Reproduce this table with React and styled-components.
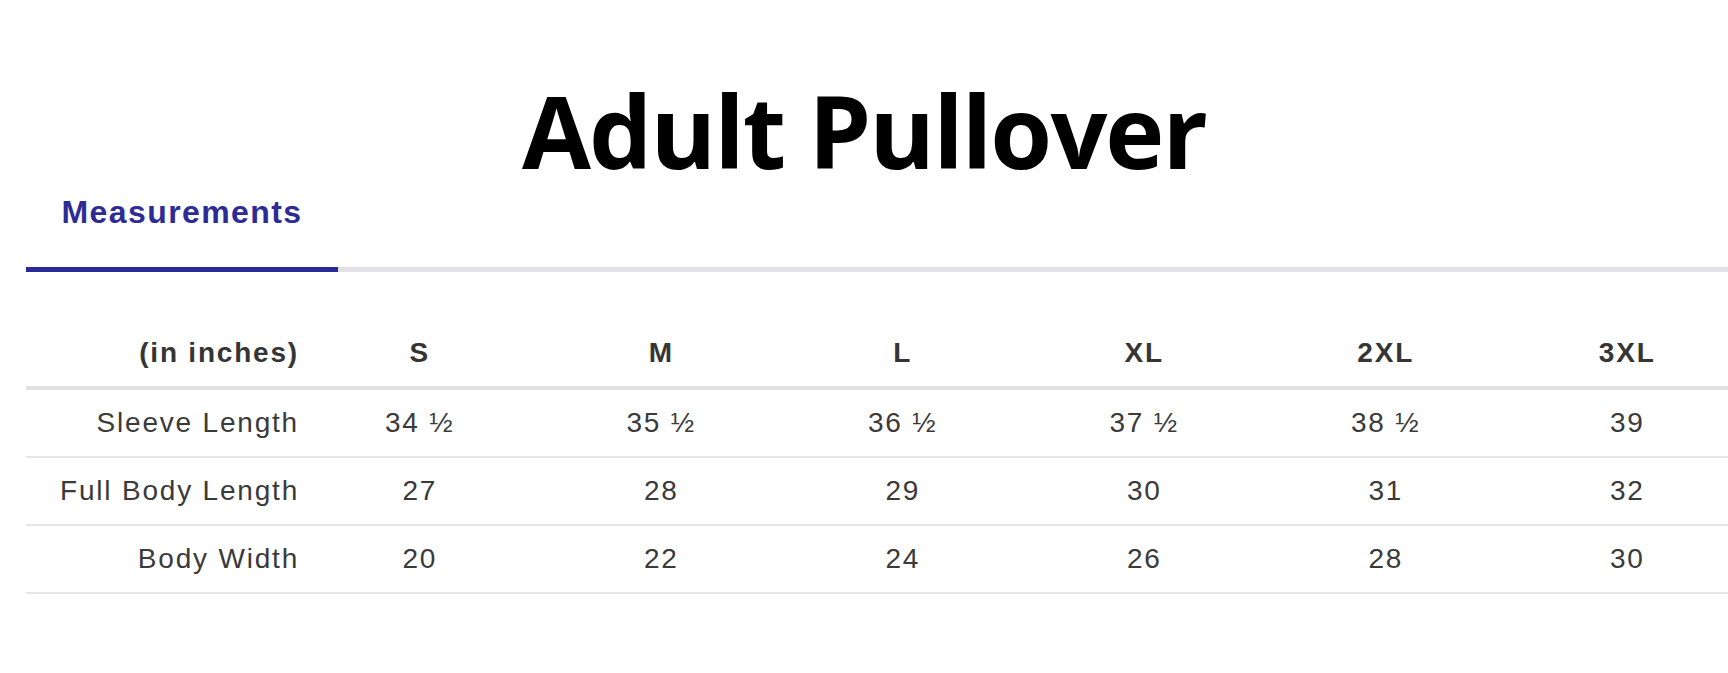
import React from "react";
import styled, { createGlobalStyle } from "styled-components";

const GlobalStyle = createGlobalStyle`
  html, body {
    margin: 0;
    padding: 0;
    background: #ffffff;
    overflow: hidden;
  }
  #root {
    width: 1728px;
    height: 673px;
    overflow: hidden;
  }
`;

const Page = styled.div`
  width: 1728px;
  height: 673px;
  overflow: hidden;
  background: #ffffff;
`;

const Title = styled.h1`
  margin: 0;
  padding-top: 70px;
  font-family: "Open Sans", "Noto Sans", sans-serif;
  font-weight: 700;
  font-size: 100px;
  line-height: 120px;
  color: #000000;
  text-align: center;
  letter-spacing: -1.9px;
`;

const Panel = styled.div`
  padding-left: 26px;
`;

const TabBar = styled.div`
  display: flex;
  border-bottom: 5px solid #e1e1e6;
`;

const Tab = styled.div`
  width: 312px;
  box-sizing: border-box;
  padding: 6px 0 39px;
  margin-bottom: -5px;
  border-bottom: 5px solid ${(p) => (p.$active ? "#29299a" : "transparent")};
  font-family: "Liberation Sans", Arial, sans-serif;
  font-weight: 700;
  font-size: 32px;
  line-height: 32px;
  letter-spacing: 1.4px;
  color: ${(p) => (p.$active ? "#2d2c96" : "#555")};
  text-align: center;
`;

const Table = styled.table`
  margin-top: 48px;
  width: 1722px;
  table-layout: fixed;
  border-collapse: collapse;
  font-family: "Liberation Sans", Arial, sans-serif;
  font-size: 28px;
  line-height: 32px;
  letter-spacing: 1.8px;
  color: #3a3a3a;
`;

const HeadCell = styled.th`
  padding: 17px 0;
  font-weight: 700;
  color: #353535;
  text-align: ${(p) => (p.$label ? "right" : "center")};
  border-bottom: 4px solid #e1e1e6;
`;

const Cell = styled.td`
  padding: 17px 0;
  font-weight: 400;
  text-align: ${(p) => (p.$label ? "right" : "center")};
  border-bottom: 2px solid #e6e6ea;
`;

const sizes = ["S", "M", "L", "XL", "2XL", "3XL"];

const rows = [
  { label: "Sleeve Length", values: ["34 ½", "35 ½", "36 ½", "37 ½", "38 ½", "39"] },
  { label: "Full Body Length", values: ["27", "28", "29", "30", "31", "32"] },
  { label: "Body Width", values: ["20", "22", "24", "26", "28", "30"] },
];

export default function App() {
  return (
    <Page>
      <GlobalStyle />
      <Title>Adult Pullover</Title>
      <Panel>
        <TabBar>
          <Tab $active>Measurements</Tab>
        </TabBar>
        <Table>
          <colgroup>
            <col style={{ width: "273px" }} />
            {sizes.map((s) => (
              <col key={s} style={{ width: "241.5px" }} />
            ))}
          </colgroup>
          <thead>
            <tr>
              <HeadCell $label>(in inches)</HeadCell>
              {sizes.map((s) => (
                <HeadCell key={s}>{s}</HeadCell>
              ))}
            </tr>
          </thead>
          <tbody>
            {rows.map((r) => (
              <tr key={r.label}>
                <Cell $label>{r.label}</Cell>
                {r.values.map((v, i) => (
                  <Cell key={i}>{v}</Cell>
                ))}
              </tr>
            ))}
          </tbody>
        </Table>
      </Panel>
    </Page>
  );
}
